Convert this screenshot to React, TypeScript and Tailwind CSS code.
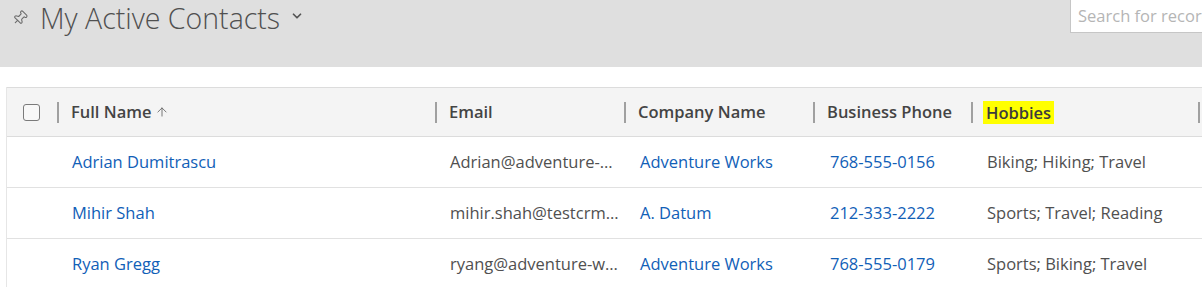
import { ArrowUp, ChevronDown, Pin } from "lucide-react";

const columns = [
  { key: "name", label: "Full Name", width: "w-[378px]" },
  { key: "email", label: "Email", width: "w-[189px]" },
  { key: "company", label: "Company Name", width: "w-[189px]" },
  { key: "phone", label: "Business Phone", width: "w-[158px]" },
  { key: "hobbies", label: "Hobbies", width: "w-[227px]" },
];

const contacts = [
  {
    name: "Adrian Dumitrascu",
    email: "Adrian@adventure-works.com",
    company: "Adventure Works",
    phone: "768-555-0156",
    hobbies: "Biking; Hiking; Travel",
  },
  {
    name: "Mihir Shah",
    email: "mihir.shah@testcrm.com",
    company: "A. Datum",
    phone: "212-333-2222",
    hobbies: "Sports; Travel; Reading",
  },
  {
    name: "Ryan Gregg",
    email: "ryang@adventure-works.com",
    company: "Adventure Works",
    phone: "768-555-0179",
    hobbies: "Sports; Biking; Travel",
  },
];

function Divider() {
  return <span className="h-[21px] w-[2px] shrink-0 bg-[#a0a0a0]" />;
}

export default function App() {
  return (
    <div className="h-[287px] w-[1202px] overflow-hidden bg-white font-['Open_Sans',sans-serif]">
      {/* view selector bar */}
      <div className="flex h-[67px] items-start bg-[#dfdfdf]">
        <div className="flex w-[1070px] shrink-0 items-center pl-[12px] pt-[1px]">
          <Pin size={16} strokeWidth={1.6} className="rotate-45 text-[#6b6b6b]" />
          <h1 className="ml-[12px] text-[28.5px] leading-[34px] font-light text-[#505050]">
            My Active Contacts
          </h1>
          <ChevronDown size={14} strokeWidth={3} className="ml-[10px] -mt-[4px] text-[#555]" />
        </div>
        <div className="-mt-px h-[34px] w-[240px] shrink-0 border border-[#c6c6c6] bg-white pl-[7px] pt-[4px] text-[16.5px] whitespace-nowrap text-[#b5b5b5]">
          Search for records
        </div>
      </div>

      {/* grid */}
      <div className="mt-[20px] ml-[6px] border-l border-[#e6e6e6]">
        <div className="flex h-[50px] items-center border-y border-[#dcdcdc] bg-[#f4f4f4]">
          <div className="flex w-[50px] shrink-0 justify-end pr-[17px]">
            <span className="h-[17px] w-[17px] rounded-[3px] border-[1.5px] border-[#7a7a7a] bg-[#f8f8f8]" />
          </div>
          {columns.map((col) => (
            <div key={col.key} className={`flex shrink-0 items-center ${col.width}`}>
              <Divider />
              {col.key === "hobbies" ? (
                <span className="ml-[10px] bg-[#ffff00] px-[3px] text-[16.5px] leading-[23px] font-semibold text-[#3c3c3c]">
                  {col.label}
                </span>
              ) : (
                <span className="ml-[12px] flex items-center text-[16.5px] font-semibold text-[#444]">
                  {col.label}
                  {col.key === "name" && (
                    <ArrowUp size={14} strokeWidth={1.5} className="ml-[3px] text-[#666]" />
                  )}
                </span>
              )}
            </div>
          ))}
          <Divider />
        </div>

        {contacts.map((c) => (
          <div
            key={c.name}
            className="flex h-[51px] items-center border-b border-[#e1e1e1] text-[16.5px] whitespace-nowrap"
          >
            <div className="w-[50px] shrink-0" />
            <div className="w-[378px] shrink-0 pl-[15px] text-[#1160b7]">{c.name}</div>
            <div className="w-[189px] shrink-0 truncate pl-[15px] pr-[3px] text-[#505050]">{c.email}</div>
            <div className="w-[189px] shrink-0 pl-[16px] text-[#1160b7]">{c.company}</div>
            <div className="w-[158px] shrink-0 pl-[17px] text-[#1160b7]">{c.phone}</div>
            <div className="w-[227px] shrink-0 pl-[16px] text-[#505050]">{c.hobbies}</div>
          </div>
        ))}
      </div>
    </div>
  );
}
